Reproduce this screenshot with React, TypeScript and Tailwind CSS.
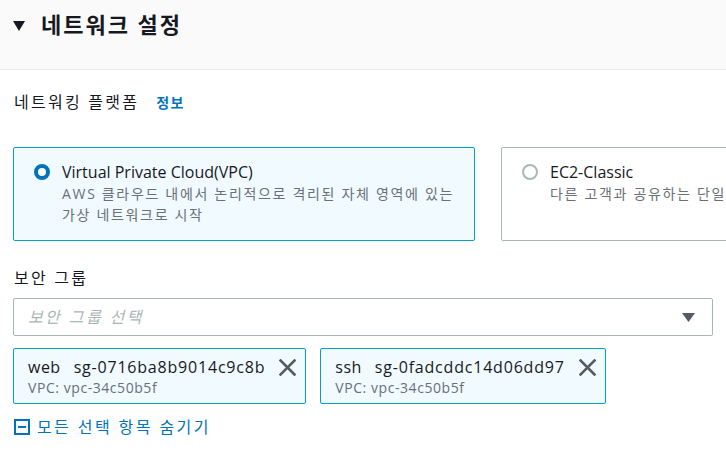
const font = { fontFamily: '"Open Sans", "Noto Sans CJK KR", sans-serif' }

type Tag = { name: string; id: string; vpc: string }

const tags: Tag[] = [
  { name: 'web', id: 'sg-0716ba8b9014c9c8b', vpc: 'VPC: vpc-34c50b5f' },
  { name: 'ssh', id: 'sg-0fadcddc14d06dd97', vpc: 'VPC: vpc-34c50b5f' },
]

function Radio({ checked }: { checked?: boolean }) {
  return checked ? (
    <span className="mt-[3px] inline-block h-4 w-4 shrink-0 rounded-full border-[4px] border-[#0073bb] bg-white" />
  ) : (
    <span className="mt-[3px] inline-block h-4 w-4 shrink-0 rounded-full border-2 border-[#aab7b8] bg-white" />
  )
}

export default function App() {
  return (
    <div className="h-[462px] w-[726px] overflow-hidden bg-white text-[#16191f]" style={font}>
      {/* Header */}
      <div className="flex h-[70px] items-start border-b border-[#eaeded] bg-[#fafafa] pl-[13px] pt-[8px]">
        <svg width="12" height="10" viewBox="0 0 12 10" className="mt-[13px]">
          <path d="M0 0 H12 L6 10 Z" fill="#16191f" />
        </svg>
        <h2 className="ml-[16px] text-[22px] font-bold leading-[32px] tracking-[0.09em]">네트워크 설정</h2>
      </div>

      <div className="px-[13px]">
        {/* Networking platform */}
        <div className="mt-[20px] flex items-center gap-[17px] pl-px">
          <span className="text-[16px] leading-[24px] tracking-[0.14em]">네트워킹 플랫폼</span>
          <span className="text-[14px] font-bold tracking-[0.1em] text-[#0073bb]">정보</span>
        </div>

        <div className="mt-[33px] flex gap-[26px]">
          <div className="flex h-[94px] w-[462px] shrink-0 gap-[12px] rounded-[2px] border border-[#00a1c9] bg-[#f1faff] pl-[20px] pt-[13px]">
            <Radio checked />
            <div>
              <div className="text-[16px] leading-[22px]">Virtual Private Cloud(VPC)</div>
              <div className="text-[14px] leading-[21px] tracking-[0.12em] text-[#687078]">
                AWS 클라우드 내에서 논리적으로 격리된 자체 영역에 있는
                <br />
                가상 네트워크로 시작
              </div>
            </div>
          </div>
          <div className="flex h-[94px] w-[300px] shrink-0 gap-[12px] overflow-hidden rounded-[2px] border border-[#aab7b8] bg-white pl-[20px] pt-[13px]">
            <Radio />
            <div>
              <div className="text-[16px] leading-[22px]">EC2-Classic</div>
              <div className="whitespace-nowrap text-[14px] leading-[21px] tracking-[0.12em] text-[#687078]">
                다른 고객과 공유하는 단일
              </div>
            </div>
          </div>
        </div>

        {/* Security group */}
        <div className="mt-[25px] pl-px text-[16px] leading-[24px] tracking-[0.14em]">보안 그룹</div>
        <div className="mt-[8px] flex h-[38px] w-[700px] items-center justify-between rounded-[2px] border border-[#aab7b8] pl-[14px] pr-[17px]">
          <span className="text-[16px] italic tracking-[0.15em] text-[#aab7b8]">보안 그룹 선택</span>
          <svg width="13" height="9" viewBox="0 0 13 9">
            <path d="M0 0 H13 L6.5 9 Z" fill="#545b64" />
          </svg>
        </div>

        <div className="mt-[12px] flex gap-[14px]">
          {tags.map((t) => (
            <div
              key={t.id}
              className="flex h-[56px] items-start gap-[14px] rounded-[2px] border border-[#00a1c9] bg-[#f1faff] pl-[14px] pr-[9px] pt-[6px]"
            >
              <div>
                <div className="flex gap-[13px] text-[16px] leading-[24px]">
                  <span className="tracking-[0.03em]">{t.name}</span>
                  <span className="tracking-[0.05em]">{t.id}</span>
                </div>
                <div className="text-[14px] leading-[18px] tracking-[0.04em] text-[#687078]">{t.vpc}</div>
              </div>
              <svg width="17" height="17" viewBox="0 0 17 17" className="mt-[4px]">
                <path d="M1.5 1.5 L15.5 15.5 M15.5 1.5 L1.5 15.5" stroke="#545b64" strokeWidth="2.6" strokeLinecap="square" />
              </svg>
            </div>
          ))}
        </div>

        <button className="mt-[11px] flex items-center gap-[7px] pl-px text-[16px] tracking-[0.15em] text-[#0073bb]">
          <span className="flex h-[16px] w-[16px] items-center justify-center border-[2px] border-[#0073bb]">
            <span className="h-[2px] w-[8px] bg-[#0073bb]" />
          </span>
          모든 선택 항목 숨기기
        </button>
      </div>
    </div>
  )
}
